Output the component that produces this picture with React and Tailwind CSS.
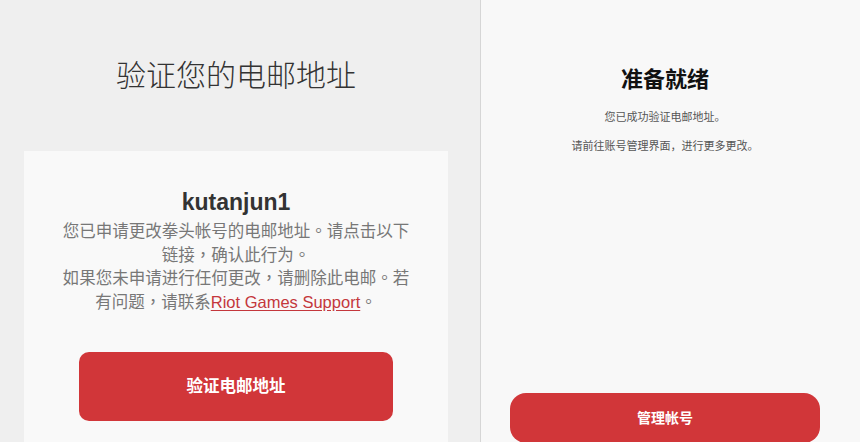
import React from 'react';

const sans = 'font-["Liberation_Sans","Noto_Sans_CJK_SC",sans-serif]';

const VerifyEmailPage = () => {
  return (
    <div className={`flex h-[442px] w-[860px] overflow-hidden ${sans}`}>
      {/* left: the email preview */}
      <div className="w-[481px] shrink-0 border-r border-[#d6d6d6] bg-[#efefef] pl-6 pr-8">
        <h1 className='pt-[55px] text-center font-["Noto_Sans_CJK_SC",sans-serif] text-[30px] font-light leading-9 text-[#333]'>
          验证您的电邮地址
        </h1>
        <div className="mt-[60px] h-[400px] bg-[#f9f9f9] pt-[37px]">
          <p className="text-center text-[23px] font-bold leading-7 text-[#333]">kutanjun1</p>
          <div
            lang="zh-Hant"
            className='mx-auto mt-1 w-[356px] text-center font-["Liberation_Sans","Noto_Sans_CJK_TC",sans-serif] text-[16.5px] leading-[23.5px] text-[#777]'
          >
            <p>您已申请更改拳头帐号的电邮地址。请点击以下链接，确认此行为。</p>
            <p>
              如果您未申请进行任何更改，请删除此电邮。若有问题，请联系<a href="#" className="text-[#c4373c] underline underline-offset-2">Riot Games Support</a>。
            </p>
          </div>
          <button
            type="button"
            className="mx-auto mt-[38px] block h-[69px] w-[314px] rounded-[10px] bg-[#d13639] text-[16.5px] font-semibold text-white"
          >
            验证电邮地址
          </button>
        </div>
      </div>

      {/* right: confirmation */}
      <div className="flex-1 bg-[#f8f8f8] pl-[29px] pr-[40px]">
        <h2 className="pt-[65px] text-center text-[22px] font-bold leading-[30px] text-[#111]">准备就绪</h2>
        <p className="mt-[14px] text-center text-[11px] leading-4 text-[#555]">您已成功验证电邮地址。</p>
        <p className="mt-[13px] text-center text-[11px] leading-4 text-[#555]">请前往账号管理界面，进行更多更改。</p>
        <button
          type="button"
          className="mt-[239px] block h-[50px] w-full rounded-2xl bg-[#d13639] text-[14px] font-bold text-white"
        >
          管理帐号
        </button>
      </div>
    </div>
  );
};

export default VerifyEmailPage;
